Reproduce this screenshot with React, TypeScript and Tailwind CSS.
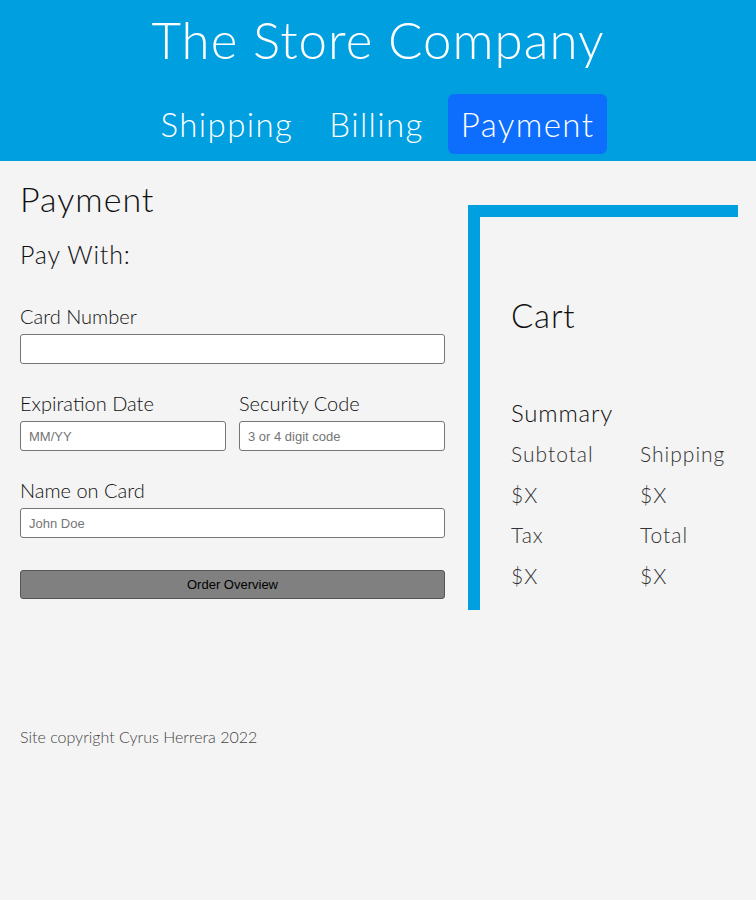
const heading = { fontFamily: "Lato, 'Open Sans', sans-serif" };

function Field({ label, placeholder }: { label: string; placeholder?: string }) {
  return (
    <div className="flex flex-col flex-1">
      <label className="text-[20px] leading-[22px] font-light text-[#111] mb-[7px]">{label}</label>
      <input
        placeholder={placeholder}
        className="h-[30px] w-full bg-white border border-[#767676] rounded-[3px] px-2 text-[13px] text-[#333] placeholder:text-[#757575] font-['Liberation_Sans',Arial,sans-serif]"
      />
    </div>
  );
}

export default function App() {
  return (
    <div className="min-h-[900px] bg-[#f4f4f4] text-[#111] font-['Lato',sans-serif]" style={heading}>
      <header className="bg-[#009fe0] h-[161px] flex flex-col items-center text-white">
        <h1 className="text-[51px] leading-[60px] font-light tracking-[1px] mt-[10px]">The Store Company</h1>
        <nav className="flex items-center mt-[24px] gap-[12px]">
          <a className="text-[33px] leading-[60px] font-light tracking-[1.4px] px-[12px]">Shipping</a>
          <a className="text-[33px] leading-[60px] font-light tracking-[1.4px] px-[12px]">Billing</a>
          <a className="text-[33px] leading-[60px] font-light tracking-[1.4px] px-[13px] bg-[#0d6efd] rounded-[6px]">Payment</a>
        </nav>
      </header>

      <main className="flex px-[20px] gap-[23px]">
        <section className="w-[425px] shrink-0 pt-[20px]">
          <h2 className="text-[34px] leading-[36px] font-light tracking-[1px]">Payment</h2>
          <h3 className="text-[25px] leading-[30px] font-light tracking-[0.8px] mt-[22px]">Pay With:</h3>
          <div className="mt-[36px]">
            <Field label="Card Number" />
          </div>
          <div className="flex gap-[13px] mt-[28px]">
            <Field label="Expiration Date" placeholder="MM/YY" />
            <Field label="Security Code" placeholder="3 or 4 digit code" />
          </div>
          <div className="mt-[28px]">
            <Field label="Name on Card" placeholder="John Doe" />
          </div>
          <button className="mt-[32px] w-full h-[29px] bg-[#808080] border border-[#555] rounded-[3px] text-[13px] text-black font-['Liberation_Sans',Arial,sans-serif]">
            Order Overview
          </button>
        </section>

        <aside className="w-[270px] shrink-0 mt-[44px] h-[405px] border-l-[12px] border-t-[12px] border-[#009fe0] pl-[31px]">
          <h2 className="text-[33px] leading-[36px] font-light tracking-[0.8px] mt-[80px]">Cart</h2>
          <h3 className="text-[24px] leading-[30px] font-light tracking-[0.8px] mt-[65px]">Summary</h3>
          <div className="grid grid-cols-[129px_1fr] text-[21px] leading-[24px] font-light text-[#333] tracking-[1px] mt-[14px] gap-y-[16.5px]">
            <span>Subtotal</span>
            <span>Shipping</span>
            <span>$X</span>
            <span>$X</span>
            <span>Tax</span>
            <span>Total</span>
            <span>$X</span>
            <span>$X</span>
          </div>
        </aside>
      </main>

      <footer className="px-[20px] mt-[115px] text-[16px] font-light text-[#444]">Site copyright Cyrus Herrera 2022</footer>
    </div>
  );
}
